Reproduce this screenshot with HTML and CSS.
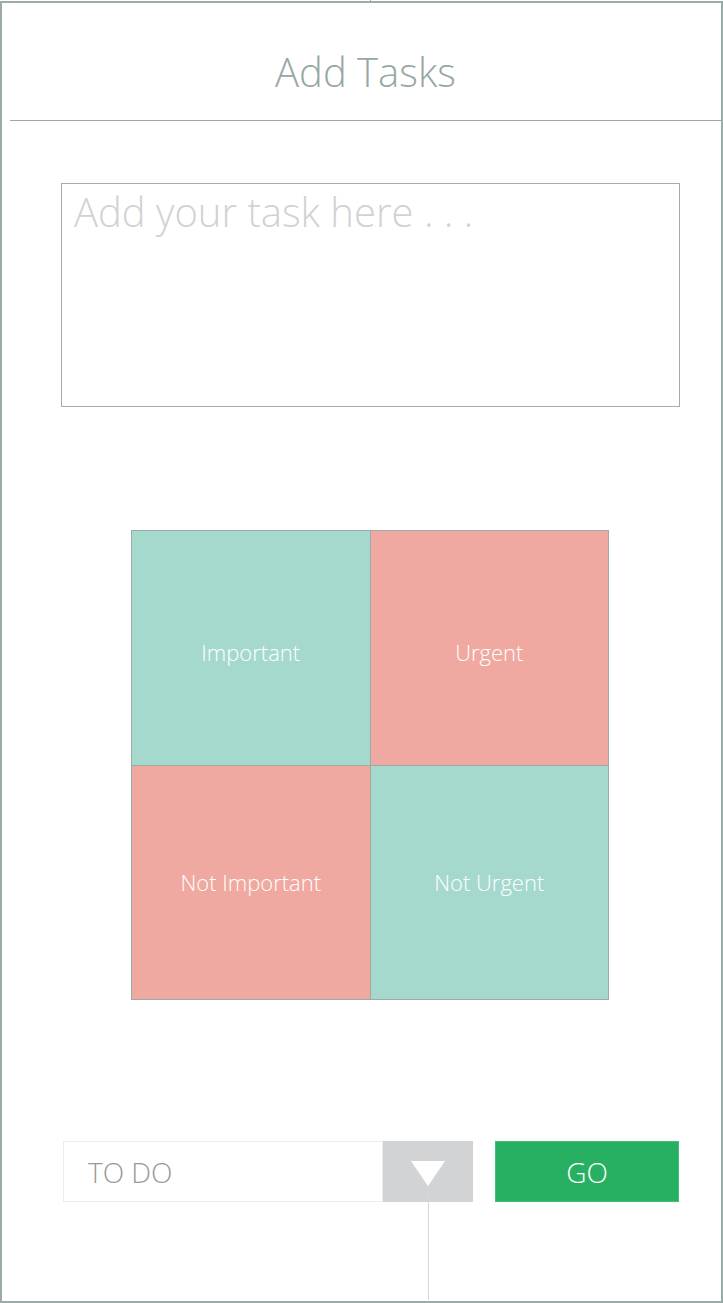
FILE: index.html
```html
<!DOCTYPE html>
<html lang="en">
<head>
    <meta charset="UTF-8">
    <meta name="viewport" content="width=device-width, initial-scale=1.0">
    <title>Add Tasks</title>
    <link rel="stylesheet" href="styles.css">
</head>
<body>
    <div class="frame">
        <div class="header">
            <h1>Add Tasks</h1>
        </div>

        <textarea class="task-input" placeholder="Add your task here . . ."></textarea>

        <div class="matrix">
            <div class="cell cell-teal cell-top">Important</div>
            <div class="cell cell-red cell-top">Urgent</div>
            <div class="cell cell-red">Not Important</div>
            <div class="cell cell-teal">Not Urgent</div>
        </div>

        <div class="actions">
            <div class="select-box">
                <span class="select-value">TO DO</span>
                <div class="select-arrow"><span class="triangle"></span></div>
            </div>
            <button class="go-button">GO</button>
        </div>
    </div>
</body>
</html>
```

FILE: styles.css
```css
body {
    margin: 0;
    font-family: 'Open Sans', 'Liberation Sans', sans-serif;
    font-weight: 300;
    background: #fff;
}
.frame {
    position: relative;
    box-sizing: border-box;
    width: 723px;
    height: 1302px;
    margin-top: 1px;
    border: 2px solid #9caaa8;
}
.frame::before {
    content: '';
    position: absolute;
    left: 368px;
    top: -3px;
    width: 1px;
    height: 2px;
    background: #9caaa8;
}
.header {
    margin-left: 8px;
    height: 117px;
    border-bottom: 1px solid #9caaa8;
    display: flex;
    align-items: center;
    justify-content: center;
}
.header h1 {
    margin: 0;
    padding-top: 20px;
    font-size: 40px;
    font-weight: 300;
    color: #97a7a4;
}
.task-input {
    display: block;
    box-sizing: border-box;
    width: 619px;
    height: 224px;
    margin: 62px 0 0 59px;
    padding: 1px 12px;
    border: 1px solid #a3aeac;
    border-radius: 0;
    resize: none;
    font-family: inherit;
    font-weight: 300;
    font-size: 40px;
    line-height: 54px;
    color: #666;
    outline: none;
}
.task-input::placeholder {
    color: #d2d2d2;
}
.matrix {
    box-sizing: border-box;
    width: 478px;
    height: 470px;
    margin: 123px 0 0 129px;
    padding: 1px;
    background: #9caaa8;
    display: grid;
    grid-template-columns: 1fr 1fr;
    grid-template-rows: 1fr 1fr;
    gap: 1px;
}
.cell {
    display: flex;
    align-items: center;
    justify-content: center;
    font-size: 22px;
    color: #fff;
}
.cell-top {
    padding-top: 8px;
}
.cell-teal {
    background: #a6d9cd;
}
.cell-red {
    background: #f0a9a0;
}
.actions {
    display: flex;
    gap: 22px;
    margin: 141px 0 0 61px;
    height: 61px;
}
.select-box {
    display: flex;
    width: 410px;
}
.select-value {
    box-sizing: border-box;
    width: 320px;
    border: 1px solid #ececec;
    padding-left: 24px;
    display: flex;
    align-items: center;
    font-size: 28px;
    color: #999;
}
.select-arrow {
    position: relative;
    width: 90px;
    background: #d1d3d4;
    display: flex;
    justify-content: center;
    padding-top: 20px;
    box-sizing: border-box;
}
.triangle {
    width: 0;
    height: 0;
    border-left: 17px solid transparent;
    border-right: 17px solid transparent;
    border-top: 25px solid #fff;
}
.select-arrow::after {
    content: '';
    position: absolute;
    left: 45px;
    top: 45px;
    width: 1px;
    height: 114px;
    background: #d6d6d6;
}
.go-button {
    width: 184px;
    border: 1px solid #3cbf76;
    background: #27b062;
    color: #fff;
    font-family: inherit;
    font-weight: 300;
    font-size: 28px;
    cursor: pointer;
}
```
